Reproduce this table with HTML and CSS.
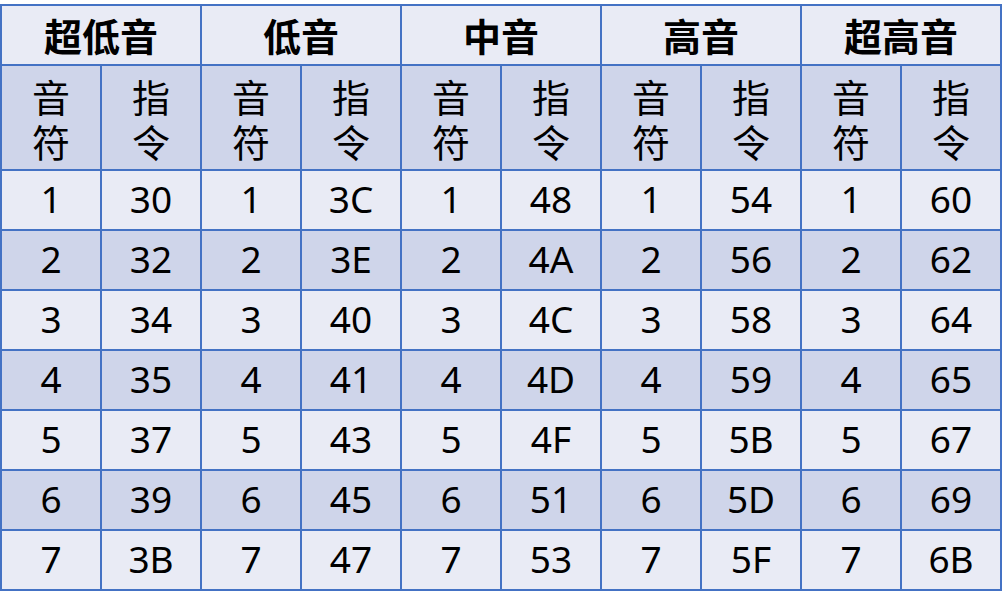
FILE: index.html
```html
<!DOCTYPE html>
<html lang="zh">
<head>
<meta charset="utf-8">
<title>音符指令表</title>
<link rel="stylesheet" href="styles.css">
</head>
<body>
<table class="notes">
  <colgroup>
    <col><col><col><col><col><col><col><col><col><col>
  </colgroup>
  <thead>
    <tr class="group">
      <th colspan="2">超低音</th>
      <th colspan="2">低音</th>
      <th colspan="2">中音</th>
      <th colspan="2">高音</th>
      <th colspan="2">超高音</th>
    </tr>
    <tr class="sub">
      <th>音<br>符</th><th>指<br>令</th>
      <th>音<br>符</th><th>指<br>令</th>
      <th>音<br>符</th><th>指<br>令</th>
      <th>音<br>符</th><th>指<br>令</th>
      <th>音<br>符</th><th>指<br>令</th>
    </tr>
  </thead>
  <tbody>
    <tr class="light"><td>1</td><td>30</td><td>1</td><td>3C</td><td>1</td><td>48</td><td>1</td><td>54</td><td>1</td><td>60</td></tr>
    <tr class="dark"><td>2</td><td>32</td><td>2</td><td>3E</td><td>2</td><td>4A</td><td>2</td><td>56</td><td>2</td><td>62</td></tr>
    <tr class="light"><td>3</td><td>34</td><td>3</td><td>40</td><td>3</td><td>4C</td><td>3</td><td>58</td><td>3</td><td>64</td></tr>
    <tr class="dark"><td>4</td><td>35</td><td>4</td><td>41</td><td>4</td><td>4D</td><td>4</td><td>59</td><td>4</td><td>65</td></tr>
    <tr class="light"><td>5</td><td>37</td><td>5</td><td>43</td><td>5</td><td>4F</td><td>5</td><td>5B</td><td>5</td><td>67</td></tr>
    <tr class="dark"><td>6</td><td>39</td><td>6</td><td>45</td><td>6</td><td>51</td><td>6</td><td>5D</td><td>6</td><td>69</td></tr>
    <tr class="light"><td>7</td><td>3B</td><td>7</td><td>47</td><td>7</td><td>53</td><td>7</td><td>5F</td><td>7</td><td>6B</td></tr>
  </tbody>
</table>
</body>
</html>
```

FILE: styles.css
```css
html, body {
  margin: 0;
  padding: 0;
  background: #ffffff;
}

body {
  padding-top: 4px;
}

.notes {
  border-collapse: collapse;
  table-layout: fixed;
  width: 1002px;
  color: #000000;
  border-top: 1px solid #b8c6e4;
}

.notes col {
  width: 10%;
}

.notes th,
.notes td {
  border: 2px solid #4472c4;
  padding: 0;
  text-align: center;
  vertical-align: middle;
}

.group th {
  height: 58px;
  background: #e9ebf5;
  font-family: "Noto Sans CJK SC", "Noto Sans", sans-serif;
  font-weight: 700;
  font-size: 38px;
  line-height: 1;
}

.sub th {
  height: 103px;
  background: #cfd5ea;
  font-family: "Noto Sans CJK SC", "Noto Sans", sans-serif;
  font-weight: 400;
  font-size: 38px;
  line-height: 45px;
}

.notes td {
  height: 55px;
  padding-bottom: 3px;
  font-family: "Noto Sans", "Open Sans", sans-serif;
  font-size: 37px;
  line-height: 1;
}

.light td {
  background: #e9ebf5;
}

.dark td {
  background: #cfd5ea;
}
```
